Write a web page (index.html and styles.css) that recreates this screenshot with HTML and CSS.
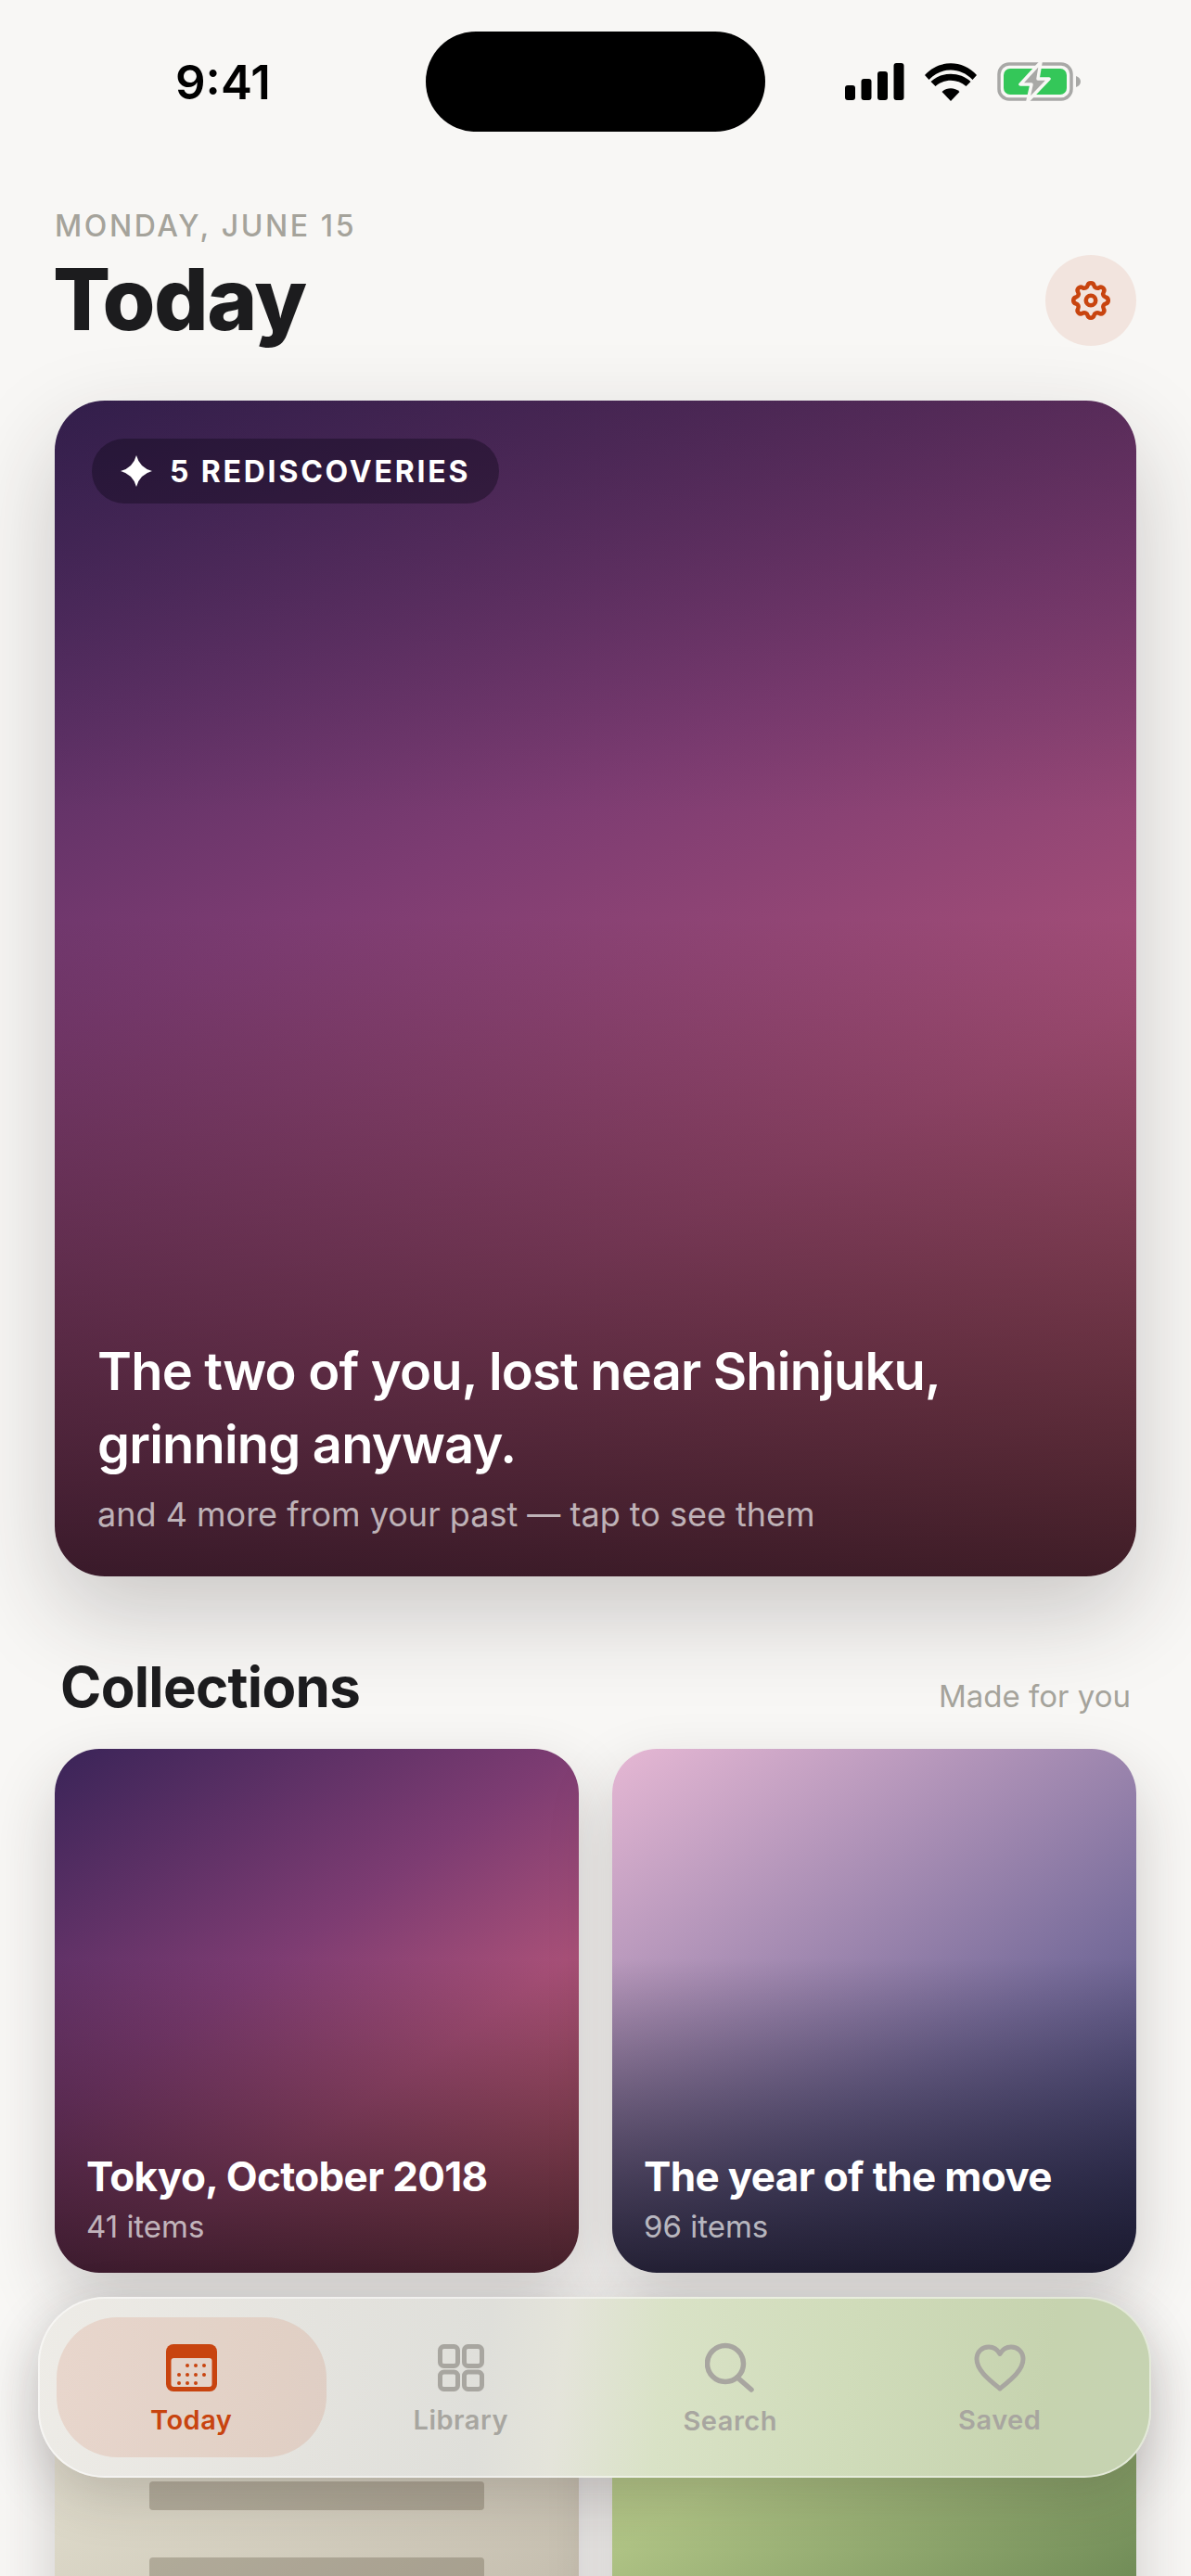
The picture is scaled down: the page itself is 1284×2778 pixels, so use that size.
FILE: index.html
```html
<!DOCTYPE html>
<html lang="en">
<head>
    <meta charset="UTF-8">
    <meta name="viewport" content="width=device-width, initial-scale=1.0">
    <title>Today</title>
    <link rel="stylesheet" href="styles.css">
</head>
<body>
    <div class="phone">
        <div class="status">
            <span class="time">9:41</span>
            <span class="island"></span>
            <span class="status-icons">
                <svg class="signal" viewBox="0 0 64 40" width="64" height="40">
                    <rect x="0" y="24" width="11" height="16" rx="3"/>
                    <rect x="17.5" y="17" width="11" height="23" rx="3"/>
                    <rect x="35" y="9" width="11" height="31" rx="3"/>
                    <rect x="52.500" y="0" width="11" height="40" rx="3"/>
                </svg>
                <svg class="wifi" viewBox="0 0 56 42" width="56" height="42">
                    <path d="M28 42 L18.500 32 C24 27 32 27 37.500 32 Z"/>
                    <path d="M11.500 25 L6.500 20 C18 9 38 9 49.500 20 L44.500 25 C35 16.500 21 16.500 11.500 25 Z" transform="translate(0 1)"/>
                    <path d="M4.500 18 L0 13 C15 -4 41 -4 56 13 L51.500 18 C38 4 18 4 4.500 18 Z" transform="translate(0 1)"/>
                </svg>
                <svg class="battery" viewBox="0 0 90 44" width="90" height="44">
                    <rect x="2" y="3" width="78" height="38" rx="11" fill="none" stroke="#a8a8a6" stroke-width="3.500"/>
                    <rect x="7" y="8" width="68" height="28" rx="7" fill="#34c759"/>
                    <path d="M85 16 C88 17 90 19 90 22 C90 25 88 27 85 28 Z" fill="#a8a8a6"/>
                    <path d="M47 1 L25 25 H37 L33 43 L56 19 H44 Z" fill="#a8a8a6" stroke="#f8f7f5" stroke-width="3.500" stroke-linejoin="round"/>
                </svg>
            </span>
        </div>

        <header class="page-head">
            <div>
                <div class="date">MONDAY, JUNE 15</div>
                <h1>Today</h1>
            </div>
            <button class="settings">
                <svg viewBox="0 0 24 24" width="50" height="50" fill="none" stroke="#c8440f" stroke-width="2.200" stroke-linejoin="round">
                    <path d="M10.325 4.317c.426-1.756 2.924-1.756 3.35 0a1.724 1.724 0 002.573 1.066c1.543-.94 3.31.826 2.37 2.37a1.724 1.724 0 001.065 2.572c1.756.426 1.756 2.924 0 3.35a1.724 1.724 0 00-1.066 2.573c.94 1.543-.826 3.31-2.37 2.37a1.724 1.724 0 00-2.572 1.065c-.426 1.756-2.924 1.756-3.35 0a1.724 1.724 0 00-2.573-1.066c-1.543.94-3.31-.826-2.37-2.37a1.724 1.724 0 00-1.065-2.572c-1.756-.426-1.756-2.924 0-3.35a1.724 1.724 0 001.066-2.573c-.94-1.543.826-3.31 2.37-2.37.996.608 2.296.07 2.572-1.065z"/>
                    <circle cx="12" cy="12" r="2.500"/>
                </svg>
            </button>
        </header>

        <main>
            <section class="hero">
                <div class="badge">
                    <svg viewBox="0 0 34 34" width="34" height="34" fill="#fff">
                        <path d="M17 0 Q20.500 13.500 34 17 Q20.500 20.500 17 34 Q13.500 20.500 0 17 Q13.500 13.500 17 0 Z"/>
                    </svg>
                    <span>5 REDISCOVERIES</span>
                </div>
                <div class="hero-text">
                    <h2>The two of you, lost near Shinjuku, grinning anyway.</h2>
                    <p>and 4 more from your past — tap to see them</p>
                </div>
            </section>

            <div class="section-head">
                <h3>Collections</h3>
                <span>Made for you</span>
            </div>

            <div class="grid">
                <div class="card card-tokyo">
                    <div class="card-title">Tokyo, October 2018</div>
                    <div class="card-sub">41 items</div>
                </div>
                <div class="card card-move">
                    <div class="card-title">The year of the move</div>
                    <div class="card-sub">96 items</div>
                </div>
                <div class="card card-tan">
                    <div class="bar"></div>
                    <div class="bar"></div>
                    <div class="bar"></div>
                    <div class="bar"></div>
                </div>
                <div class="card card-green"></div>
            </div>
        </main>

        <nav class="tabbar">
            <div class="tab active">
                <svg viewBox="0 0 55 51" width="55" height="51">
                    <rect width="55" height="51" rx="8" fill="#c8440f"/>
                    <rect x="5.500" y="15" width="44" height="31" rx="3" fill="#e4d4ca"/>
                    <g fill="#c8440f">
                        <circle cx="23" cy="23" r="2"/><circle cx="32" cy="23" r="2"/><circle cx="41" cy="23" r="2"/>
                        <circle cx="14" cy="33" r="2"/><circle cx="23" cy="33" r="2"/><circle cx="32" cy="33" r="2"/><circle cx="41" cy="33" r="2"/>
                        <circle cx="14" cy="42" r="2"/><circle cx="23" cy="42" r="2"/><circle cx="32" cy="42" r="2"/>
                    </g>
                </svg>
                <span>Today</span>
            </div>
            <div class="tab">
                <svg viewBox="0 0 50 51" width="50" height="51" fill="none" stroke="#a8a6a0" stroke-width="5">
                    <rect x="2.500" y="2.500" width="19" height="21" rx="4"/>
                    <rect x="28.500" y="2.500" width="19" height="21" rx="4"/>
                    <rect x="2.500" y="30" width="19" height="18.500" rx="4"/>
                    <rect x="28.500" y="30" width="19" height="18.500" rx="4"/>
                </svg>
                <span>Library</span>
            </div>
            <div class="tab">
                <svg viewBox="0 0 54 54" width="54" height="54" fill="none" stroke="#a8a6a0" stroke-width="5.500" stroke-linecap="round">
                    <circle cx="22" cy="23" r="19.500"/>
                    <line x1="35" y1="38" x2="50" y2="51"/>
                </svg>
                <span>Search</span>
            </div>
            <div class="tab">
                <svg viewBox="0 0 56 51" width="56" height="51" fill="none" stroke="#a8a6a0" stroke-width="5" stroke-linejoin="round">
                    <path d="M28 48 C16 38 3 28 3 16 C3 8 9 3 16 3 C21 3 25.500 6 28 10.500 C30.500 6 35 3 40 3 C47 3 53 8 53 16 C53 28 40 38 28 48 Z"/>
                </svg>
                <span>Saved</span>
            </div>
        </nav>
    </div>
</body>
</html>
```

FILE: styles.css
```css
* {
    box-sizing: border-box;
}
body {
    margin: 0;
    font-family: Inter, "Noto Sans", sans-serif;
    background-color: #f8f7f5;
    color: #1c1c1e;
}
.phone {
    position: relative;
    width: 1284px;
    height: 2778px;
    overflow: hidden;
}

/* status bar */
.status {
    display: grid;
    grid-template-columns: 1fr 366px 1fr;
    align-items: center;
    height: 108px;
    margin-top: 34px;
}
.time {
    justify-self: start;
    margin-left: 189px;
    font-size: 51px;
    font-weight: 600;
    color: #000;
}
.island {
    height: 108px;
    border-radius: 54px;
    background-color: #000;
}
.status-icons {
    display: flex;
    align-items: center;
    margin-left: 86px;
}
.wifi {
    margin-left: 22px;
}
.battery {
    margin-left: 22px;
}

/* page header */
.page-head {
    display: flex;
    justify-content: space-between;
    align-items: flex-end;
    margin-top: 82px;
    padding: 0 59px;
}
.date {
    font-size: 32px;
    font-weight: 500;
    letter-spacing: 2.600px;
    line-height: 40px;
    color: #a5a39b;
}
h1 {
    margin: 6px 0 0 -2px;
    font-size: 92px;
    font-weight: 800;
    letter-spacing: -1.500px;
    line-height: 106px;
}
.settings {
    display: flex;
    align-items: center;
    justify-content: center;
    width: 98px;
    height: 98px;
    margin-bottom: 3px;
    padding: 0;
    border: none;
    border-radius: 50%;
    background-color: #f2e4de;
}

main {
    padding: 0 59px;
}

/* hero card */
.hero {
    display: flex;
    flex-direction: column;
    justify-content: space-between;
    height: 1268px;
    margin-top: 56px;
    padding: 41px 40px 44px 46px;
    border-radius: 54px;
    background: linear-gradient(to bottom, rgba(30, 15, 40, 0.28) 0%, rgba(30, 15, 40, 0) 35%),
        linear-gradient(to bottom, rgba(25, 10, 20, 0) 44%, rgba(25, 10, 20, 0.78) 100%),
        linear-gradient(155deg, #3a2458 0%, #7d3c72 38%, #a85078 66%, #c4606a 100%);
    box-shadow: 0 40px 100px rgba(40, 30, 30, 0.22);
}
.badge {
    display: flex;
    align-items: center;
    gap: 19px;
    align-self: flex-start;
    height: 70px;
    margin-left: -6px;
    padding: 0 31px;
    border-radius: 35px;
    background-color: rgba(20, 10, 30, 0.45);
    color: #fff;
    font-size: 32px;
    font-weight: 700;
    letter-spacing: 2.800px;
}
.hero-text h2 {
    margin: 0;
    font-size: 56px;
    font-weight: 600;
    letter-spacing: -0.800px;
    line-height: 79px;
    color: #fff;
}
.hero-text p {
    margin: 12px 0 0;
    font-size: 36px;
    line-height: 46px;
    color: rgba(255, 255, 255, 0.66);
}

/* collections */
.section-head {
    display: flex;
    justify-content: space-between;
    align-items: baseline;
    margin-top: 83px;
    padding: 0 6px;
}
.section-head h3 {
    margin: 0;
    font-size: 60px;
    font-weight: 700;
    letter-spacing: -0.700px;
    line-height: 72px;
}
.section-head span {
    font-size: 33px;
    color: #a5a39b;
}
.grid {
    display: grid;
    grid-template-columns: 565px 565px;
    grid-auto-rows: 565px;
    gap: 36px;
    margin-top: 31px;
}
.card {
    display: flex;
    flex-direction: column;
    justify-content: flex-end;
    padding: 0 35px 30px 34px;
    border-radius: 48px;
    box-shadow: 0 30px 70px rgba(40, 30, 30, 0.2);
}
.card-tokyo {
    background: linear-gradient(to bottom, rgba(25, 10, 20, 0) 40%, rgba(25, 10, 20, 0.74) 100%),
        linear-gradient(145deg, #3a2458 0%, #7d3c72 41%, #a85078 64%, #c4606a 100%);
}
.card-move {
    background: linear-gradient(to bottom, rgba(22, 20, 36, 0) 40%, rgba(22, 20, 36, 0.86) 100%),
        linear-gradient(145deg, #e6b8d4 0%, #7a6e9c 60%, #3a3e70 100%);
}
.card-tan {
    justify-content: flex-start;
    padding: 25px 102px 0;
    background: linear-gradient(145deg, #ece8da 0%, #dcd8c8 25%, #c6bfb0 70%, #b8b2a2 100%);
}
.card-green {
    background: linear-gradient(145deg, #c0d090 0%, #aec284 28%, #6c8854 75%, #5c7848 100%);
}
.bar {
    flex: none;
    height: 31px;
    margin-bottom: 51px;
    border-radius: 4px;
    background-color: rgba(90, 80, 60, 0.3);
}
.card-title {
    font-size: 44px;
    font-weight: 700;
    letter-spacing: -0.650px;
    line-height: 56px;
    color: #fff;
}
.card-sub {
    margin-top: 6px;
    font-size: 33px;
    line-height: 40px;
    color: rgba(255, 255, 255, 0.68);
}

/* bottom tab bar - colours sampled from the frosted look of the reference */
.tabbar {
    position: absolute;
    left: 41px;
    bottom: 106px;
    display: flex;
    align-items: center;
    width: 1200px;
    height: 195px;
    padding: 0 16px 0 18px;
    border: 2px solid rgba(255, 255, 255, 0.5);
    border-radius: 72px;
    background: linear-gradient(97deg, #eeece7 0%, #e4e3de 25%, #dfdfda 40%, #e4e4da 47%, #d9e2c6 56%, #d0dcba 72%, #c6d3af 90%, #c6d3b2 100%);
    background-origin: border-box;
    box-shadow: 0 18px 60px rgba(40, 30, 30, 0.2);
}
.tab {
    display: flex;
    flex: 1;
    flex-direction: column;
    align-items: center;
    justify-content: center;
    gap: 13px;
    height: 151px;
    padding-top: 5px;
    color: #a8a6a0;
    font-size: 29px;
    font-weight: 600;
    letter-spacing: 0.5px;
}
.tab.active {
    border-radius: 66px;
    background-color: rgba(200, 68, 15, 0.12);
    color: #c8440f;
}
```
